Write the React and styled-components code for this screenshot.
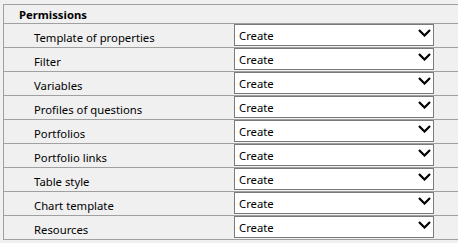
import React from "react";
import styled, { createGlobalStyle } from "styled-components";

const Global = createGlobalStyle`
  html, body { margin: 0; padding: 0; background: #f0f0f0; }
  body { font-family: "Noto Sans", "Open Sans", sans-serif; font-size: 11.3px; color: #000; }
`;

const Page = styled.div`
  padding: 4px 0 0 3px;
  width: 455px;
`;

const Grid = styled.div`
  border-top: 1px solid #a0a0a0;
  border-left: 1px solid #a0a0a0;
`;

const Header = styled.div`
  height: 18px;
  border-bottom: 1px solid #a0a0a0;
  display: flex;
  align-items: center;
  padding-left: 15px;
  font-weight: 700;
`;

const Row = styled.div`
  height: 23px;
  border-bottom: 1px solid #a0a0a0;
  display: flex;
  align-items: flex-start;
`;

const Label = styled.div`
  width: 230px;
  padding-left: 30px;
  height: 23px;
  line-height: 22px;
  padding-top: 3px;
  box-sizing: border-box;
  white-space: nowrap;
`;

const Select = styled.div`
  width: 200px;
  height: 22px;
  box-sizing: border-box;
  background: #fff;
  border: 1px solid #7a7a7a;
  display: flex;
  align-items: center;
  justify-content: space-between;
  padding: 1px 2px 0 4px;
`;

const Chevron = () => (
  <svg width="13" height="8" viewBox="0 0 13 8" style={{ marginBottom: 5 }}>
    <polyline points="1,1 6.5,6.5 12,1" fill="none" stroke="#000" strokeWidth="2.2" />
  </svg>
);

const items = [
  "Template of properties",
  "Filter",
  "Variables",
  "Profiles of questions",
  "Portfolios",
  "Portfolio links",
  "Table style",
  "Chart template",
  "Resources",
];

export default function App() {
  return (
    <Page>
      <Global />
      <Grid>
        <Header>Permissions</Header>
        {items.map((it) => (
          <Row key={it}>
            <Label>{it}</Label>
            <Select>
              <span>Create</span>
              <Chevron />
            </Select>
          </Row>
        ))}
      </Grid>
    </Page>
  );
}
